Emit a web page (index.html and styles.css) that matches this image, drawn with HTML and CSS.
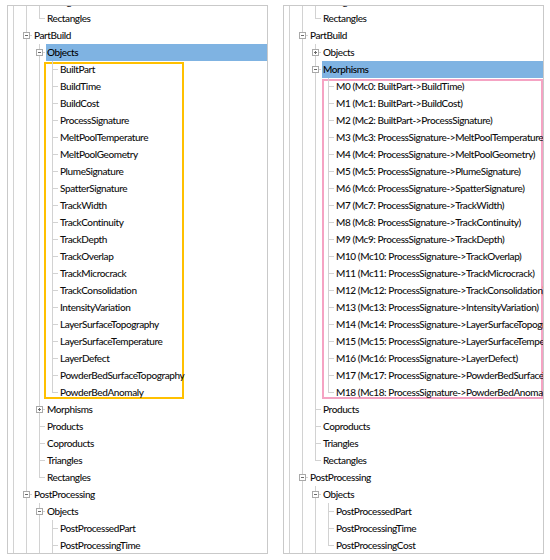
FILE: index.html
```html
<!DOCTYPE html>
<html>
<head>
<meta charset="utf-8">
<link rel="stylesheet" href="styles.css">
</head>
<body>
<div class="page">
  <div class="panel">
    <ul class="tree top">
      <li>
        <div class="row"><span class="exp minus"></span><span class="lbl">Process</span></div>
        <ul>
          <li>
            <div class="row"><span class="exp minus"></span><span class="lbl">Design</span></div>
            <ul>
              <li><div class="row"><span class="sp"></span><span class="lbl">Triangles</span></div></li>
              <li><div class="row"><span class="sp"></span><span class="lbl">Rectangles</span></div></li>
            </ul>
          </li>
          <li>
            <div class="row"><span class="exp minus"></span><span class="lbl">PartBuild</span></div>
            <ul>
              <li>
                <div class="row"><span class="exp minus"></span><span class="lbl sel">Objects</span></div>
                <ul class="box-yellow">
                  <li><div class="row"><span class="sp"></span><span class="lbl">BuiltPart</span></div></li>
                  <li><div class="row"><span class="sp"></span><span class="lbl">BuildTime</span></div></li>
                  <li><div class="row"><span class="sp"></span><span class="lbl">BuildCost</span></div></li>
                  <li><div class="row"><span class="sp"></span><span class="lbl">ProcessSignature</span></div></li>
                  <li><div class="row"><span class="sp"></span><span class="lbl">MeltPoolTemperature</span></div></li>
                  <li><div class="row"><span class="sp"></span><span class="lbl">MeltPoolGeometry</span></div></li>
                  <li><div class="row"><span class="sp"></span><span class="lbl">PlumeSignature</span></div></li>
                  <li><div class="row"><span class="sp"></span><span class="lbl">SpatterSignature</span></div></li>
                  <li><div class="row"><span class="sp"></span><span class="lbl">TrackWidth</span></div></li>
                  <li><div class="row"><span class="sp"></span><span class="lbl">TrackContinuity</span></div></li>
                  <li><div class="row"><span class="sp"></span><span class="lbl">TrackDepth</span></div></li>
                  <li><div class="row"><span class="sp"></span><span class="lbl">TrackOverlap</span></div></li>
                  <li><div class="row"><span class="sp"></span><span class="lbl">TrackMicrocrack</span></div></li>
                  <li><div class="row"><span class="sp"></span><span class="lbl">TrackConsolidation</span></div></li>
                  <li><div class="row"><span class="sp"></span><span class="lbl">IntensityVariation</span></div></li>
                  <li><div class="row"><span class="sp"></span><span class="lbl">LayerSurfaceTopography</span></div></li>
                  <li><div class="row"><span class="sp"></span><span class="lbl">LayerSurfaceTemperature</span></div></li>
                  <li><div class="row"><span class="sp"></span><span class="lbl">LayerDefect</span></div></li>
                  <li><div class="row"><span class="sp"></span><span class="lbl">PowderBedSurfaceTopography</span></div></li>
                  <li><div class="row"><span class="sp"></span><span class="lbl">PowderBedAnomaly</span></div></li>
                </ul>
              </li>
              <li><div class="row"><span class="exp plus"></span><span class="lbl">Morphisms</span></div></li>
              <li><div class="row"><span class="sp"></span><span class="lbl">Products</span></div></li>
              <li><div class="row"><span class="sp"></span><span class="lbl">Coproducts</span></div></li>
              <li><div class="row"><span class="sp"></span><span class="lbl">Triangles</span></div></li>
              <li><div class="row"><span class="sp"></span><span class="lbl">Rectangles</span></div></li>
            </ul>
          </li>
          <li>
            <div class="row"><span class="exp minus"></span><span class="lbl">PostProcessing</span></div>
            <ul>
              <li>
                <div class="row"><span class="exp minus"></span><span class="lbl">Objects</span></div>
                <ul>
                  <li><div class="row"><span class="sp"></span><span class="lbl">PostProcessedPart</span></div></li>
                  <li><div class="row"><span class="sp"></span><span class="lbl">PostProcessingTime</span></div></li>
                  <li><div class="row"><span class="sp"></span><span class="lbl">PostProcessingCost</span></div></li>
                </ul>
              </li>
              <li><div class="row"><span class="exp plus"></span><span class="lbl">Morphisms</span></div></li>
            </ul>
          </li>
          <li><div class="row"><span class="exp plus"></span><span class="lbl">Quality</span></div></li>
        </ul>
      </li>
      <li><div class="row"><span class="exp plus"></span><span class="lbl">Validation</span></div></li>
    </ul>
  </div>

  <div class="panel">
    <ul class="tree top">
      <li>
        <div class="row"><span class="exp minus"></span><span class="lbl">Process</span></div>
        <ul>
          <li>
            <div class="row"><span class="exp minus"></span><span class="lbl">Design</span></div>
            <ul>
              <li><div class="row"><span class="sp"></span><span class="lbl">Triangles</span></div></li>
              <li><div class="row"><span class="sp"></span><span class="lbl">Rectangles</span></div></li>
            </ul>
          </li>
          <li>
            <div class="row"><span class="exp minus"></span><span class="lbl">PartBuild</span></div>
            <ul>
              <li><div class="row"><span class="exp plus"></span><span class="lbl">Objects</span></div></li>
              <li>
                <div class="row"><span class="exp minus"></span><span class="lbl sel">Morphisms</span></div>
                <ul class="box-pink">
                  <li><div class="row"><span class="sp"></span><span class="lbl">M0 (Mc0: BuiltPart-&gt;BuildTime)</span></div></li>
                  <li><div class="row"><span class="sp"></span><span class="lbl">M1 (Mc1: BuiltPart-&gt;BuildCost)</span></div></li>
                  <li><div class="row"><span class="sp"></span><span class="lbl">M2 (Mc2: BuiltPart-&gt;ProcessSignature)</span></div></li>
                  <li><div class="row"><span class="sp"></span><span class="lbl">M3 (Mc3: ProcessSignature-&gt;MeltPoolTemperature)</span></div></li>
                  <li><div class="row"><span class="sp"></span><span class="lbl">M4 (Mc4: ProcessSignature-&gt;MeltPoolGeometry)</span></div></li>
                  <li><div class="row"><span class="sp"></span><span class="lbl">M5 (Mc5: ProcessSignature-&gt;PlumeSignature)</span></div></li>
                  <li><div class="row"><span class="sp"></span><span class="lbl">M6 (Mc6: ProcessSignature-&gt;SpatterSignature)</span></div></li>
                  <li><div class="row"><span class="sp"></span><span class="lbl">M7 (Mc7: ProcessSignature-&gt;TrackWidth)</span></div></li>
                  <li><div class="row"><span class="sp"></span><span class="lbl">M8 (Mc8: ProcessSignature-&gt;TrackContinuity)</span></div></li>
                  <li><div class="row"><span class="sp"></span><span class="lbl">M9 (Mc9: ProcessSignature-&gt;TrackDepth)</span></div></li>
                  <li><div class="row"><span class="sp"></span><span class="lbl">M10 (Mc10: ProcessSignature-&gt;TrackOverlap)</span></div></li>
                  <li><div class="row"><span class="sp"></span><span class="lbl">M11 (Mc11: ProcessSignature-&gt;TrackMicrocrack)</span></div></li>
                  <li><div class="row"><span class="sp"></span><span class="lbl">M12 (Mc12: ProcessSignature-&gt;TrackConsolidation)</span></div></li>
                  <li><div class="row"><span class="sp"></span><span class="lbl">M13 (Mc13: ProcessSignature-&gt;IntensityVariation)</span></div></li>
                  <li><div class="row"><span class="sp"></span><span class="lbl">M14 (Mc14: ProcessSignature-&gt;LayerSurfaceTopography)</span></div></li>
                  <li><div class="row"><span class="sp"></span><span class="lbl">M15 (Mc15: ProcessSignature-&gt;LayerSurfaceTemperature)</span></div></li>
                  <li><div class="row"><span class="sp"></span><span class="lbl">M16 (Mc16: ProcessSignature-&gt;LayerDefect)</span></div></li>
                  <li><div class="row"><span class="sp"></span><span class="lbl">M17 (Mc17: ProcessSignature-&gt;PowderBedSurfaceTopography)</span></div></li>
                  <li><div class="row"><span class="sp"></span><span class="lbl">M18 (Mc18: ProcessSignature-&gt;PowderBedAnomaly)</span></div></li>
                </ul>
              </li>
              <li><div class="row"><span class="sp"></span><span class="lbl">Products</span></div></li>
              <li><div class="row"><span class="sp"></span><span class="lbl">Coproducts</span></div></li>
              <li><div class="row"><span class="sp"></span><span class="lbl">Triangles</span></div></li>
              <li><div class="row"><span class="sp"></span><span class="lbl">Rectangles</span></div></li>
            </ul>
          </li>
          <li>
            <div class="row"><span class="exp minus"></span><span class="lbl">PostProcessing</span></div>
            <ul>
              <li>
                <div class="row"><span class="exp minus"></span><span class="lbl">Objects</span></div>
                <ul>
                  <li><div class="row"><span class="sp"></span><span class="lbl">PostProcessedPart</span></div></li>
                  <li><div class="row"><span class="sp"></span><span class="lbl">PostProcessingTime</span></div></li>
                  <li><div class="row"><span class="sp"></span><span class="lbl">PostProcessingCost</span></div></li>
                </ul>
              </li>
              <li><div class="row"><span class="exp plus"></span><span class="lbl">Morphisms</span></div></li>
            </ul>
          </li>
          <li><div class="row"><span class="exp plus"></span><span class="lbl">Quality</span></div></li>
        </ul>
      </li>
      <li><div class="row"><span class="exp plus"></span><span class="lbl">Validation</span></div></li>
    </ul>
  </div>
</div>
</body>
</html>
```

FILE: styles.css
```css
html, body {
  margin: 0;
  padding: 0;
  background: #ffffff;
}

.page {
  display: flex;
  gap: 15px;
  padding: 5px 0 0 7px;
  font-family: "Lato", "Liberation Sans", sans-serif;
  font-size: 10px;
  font-weight: 500;
  letter-spacing: -0.4px;
  color: #0e0e0e;
}

.panel {
  width: 261px;
  height: 549px;
  box-sizing: border-box;
  border: 1px solid #c9c9c9;
  overflow: hidden;
  background: #ffffff;
}

.tree, .tree ul {
  list-style: none;
  margin: 0;
  padding: 0;
}

.tree.top {
  margin-top: -47px;
}

.tree ul {
  padding-left: 13px;
}

.tree li {
  background:
    linear-gradient(#d2d2d2, #d2d2d2) 5px 0 / 1px 100% no-repeat,
    linear-gradient(#d2d2d2, #d2d2d2) 5px 8px / 6px 1px no-repeat;
}

.tree li:last-child {
  background:
    linear-gradient(#d2d2d2, #d2d2d2) 5px 0 / 1px 9px no-repeat,
    linear-gradient(#d2d2d2, #d2d2d2) 5px 8px / 6px 1px no-repeat;
}

.row {
  display: flex;
  align-items: center;
  height: 17px;
}

.sp {
  flex: none;
  width: 12px;
}

.exp {
  flex: none;
  box-sizing: border-box;
  width: 7px;
  height: 7px;
  margin: 0 3px 0 2px;
  border: 1px solid #a9a9a9;
}

.exp.minus {
  background:
    linear-gradient(#6a6a6a, #6a6a6a) center / 3px 1px no-repeat,
    #ffffff;
}

.exp.plus {
  background:
    linear-gradient(#6a6a6a, #6a6a6a) center / 3px 1px no-repeat,
    linear-gradient(#6a6a6a, #6a6a6a) center / 1px 3px no-repeat,
    #ffffff;
}

.lbl {
  flex: 1;
  padding-left: 1px;
  line-height: 17px;
  height: 17px;
  white-space: nowrap;
}

.lbl.sel {
  background: #7fb3e2;
  color: #000000;
}

.box-yellow {
  width: fit-content;
  padding-right: 3px;
  background:
    linear-gradient(#ffc000, #ffc000) 10px 1px / 2px calc(100% - 3px) no-repeat,
    linear-gradient(#ffc000, #ffc000) 100% 1px / 2px calc(100% - 3px) no-repeat,
    linear-gradient(#ffc000, #ffc000) 10px 1px / calc(100% - 10px) 2px no-repeat,
    linear-gradient(#ffc000, #ffc000) 10px calc(100% - 2px) / calc(100% - 10px) 2px no-repeat;
}

.box-pink {
  background:
    linear-gradient(#f5a3c3, #f5a3c3) 12px 1px / 2px calc(100% - 3px) no-repeat,
    linear-gradient(#f5a3c3, #f5a3c3) 100% 1px / 2px calc(100% - 3px) no-repeat,
    linear-gradient(#f5a3c3, #f5a3c3) 12px 1px / calc(100% - 12px) 2px no-repeat,
    linear-gradient(#f5a3c3, #f5a3c3) 12px calc(100% - 2px) / calc(100% - 12px) 2px no-repeat;
}
```
